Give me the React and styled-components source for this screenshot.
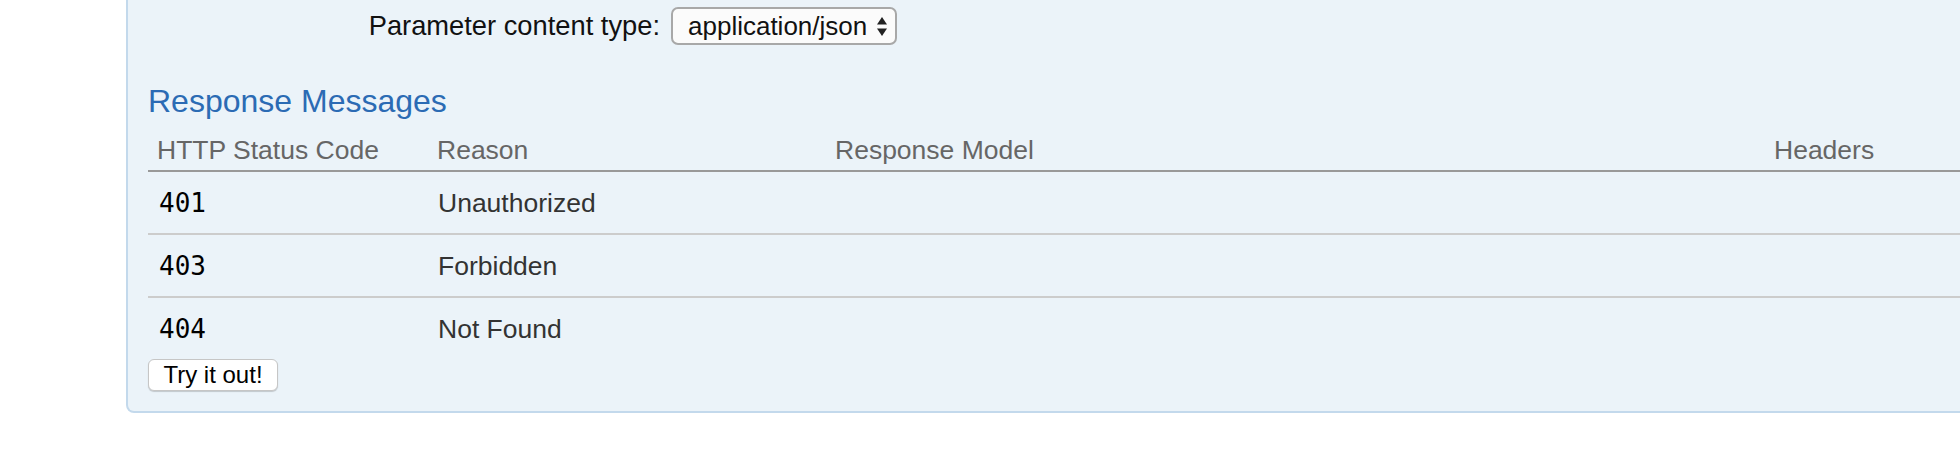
import styled, { createGlobalStyle } from 'styled-components';

const GlobalStyle = createGlobalStyle`
  html, body {
    margin: 0;
    padding: 0;
    background: #fff;
    overflow: hidden;
  }
  body {
    font-family: 'Liberation Sans', Arial, sans-serif;
  }
`;

const Page = styled.div`
  width: 1960px;
  height: 466px;
  overflow: hidden;
`;

const Panel = styled.div`
  margin-left: 126px;
  width: 1900px;
  background: #ebf3f9;
  border: 2px solid #c3d9ec;
  border-top: none;
  border-radius: 0 0 8px 8px;
  padding: 0 20px 20px 20px;
`;

const FormRow = styled.div`
  display: flex;
  align-items: center;
  gap: 11px;
  padding-top: 7px;
`;

const Label = styled.label`
  width: 512px;
  text-align: right;
  font-size: 27.3px;
  color: #111;
`;

const Select = styled.div`
  position: relative;
  box-sizing: border-box;
  width: 226px;
  height: 38px;
  border: 2px solid #a8a8a8;
  border-radius: 7px;
  background: #fbfbfb;
  font-size: 26px;
  line-height: 34px;
  padding-left: 15px;
  color: #111;
`;

const Arrows = styled.svg`
  position: absolute;
  right: 7px;
  top: 7px;
`;

const Heading = styled.h4`
  margin: 37px 0 14px;
  font-size: 32px;
  line-height: 38px;
  font-weight: normal;
  color: #2b6bb4;
`;

const Grid = styled.div`
  display: grid;
  grid-template-columns: 280px 398px 939px 1fr;
  border-bottom: ${(p) => (p.$last ? 'none' : `2px solid ${p.$head ? '#999' : '#ccc'}`)};
`;

const HeadCell = styled.div`
  padding: 0 0 4px 9px;
  font-size: 26.5px;
  line-height: 32px;
  color: #666;
`;

const Cell = styled.div`
  padding: 15px 0 14px ${(p) => (p.$mono ? '11px' : '10px')};
  font-size: ${(p) => (p.$mono ? '26px' : '26.5px')};
  line-height: 32px;
  font-family: ${(p) =>
    p.$mono ? "'DejaVu Sans Mono', monospace" : "'Liberation Sans', Arial, sans-serif"};
  color: ${(p) => (p.$mono ? '#000' : '#333')};
`;

const Button = styled.button`
  display: block;
  box-sizing: border-box;
  width: 130px;
  height: 32px;
  padding: 0;
  font-family: 'Liberation Sans', Arial, sans-serif;
  font-size: 24px;
  color: #000;
  background: #fff;
  border: 1px solid #c6c6c6;
  border-radius: 6px;
  box-shadow: 0 1px 1px rgba(0, 0, 0, 0.18);
`;

const messages = [
  { code: '401', reason: 'Unauthorized' },
  { code: '403', reason: 'Forbidden' },
  { code: '404', reason: 'Not Found' },
];

export default function App() {
  return (
    <Page>
      <GlobalStyle />
      <Panel>
        <FormRow>
          <Label>Parameter content type:</Label>
          <Select>
            application/json
            <Arrows width="12" height="21" viewBox="0 0 12 21">
              <path d="M6 1 L11 8.5 L1 8.5 Z" fill="#222" />
              <path d="M6 20 L11 12.5 L1 12.5 Z" fill="#222" />
            </Arrows>
          </Select>
        </FormRow>
        <Heading>Response Messages</Heading>
        <Grid $head>
          <HeadCell>HTTP Status Code</HeadCell>
          <HeadCell>Reason</HeadCell>
          <HeadCell>Response Model</HeadCell>
          <HeadCell>Headers</HeadCell>
        </Grid>
        {messages.map((m, i) => (
          <Grid key={m.code} $last={i === messages.length - 1}>
            <Cell $mono>{m.code}</Cell>
            <Cell>{m.reason}</Cell>
            <Cell />
            <Cell />
          </Grid>
        ))}
        <Button>Try it out!</Button>
      </Panel>
    </Page>
  );
}
